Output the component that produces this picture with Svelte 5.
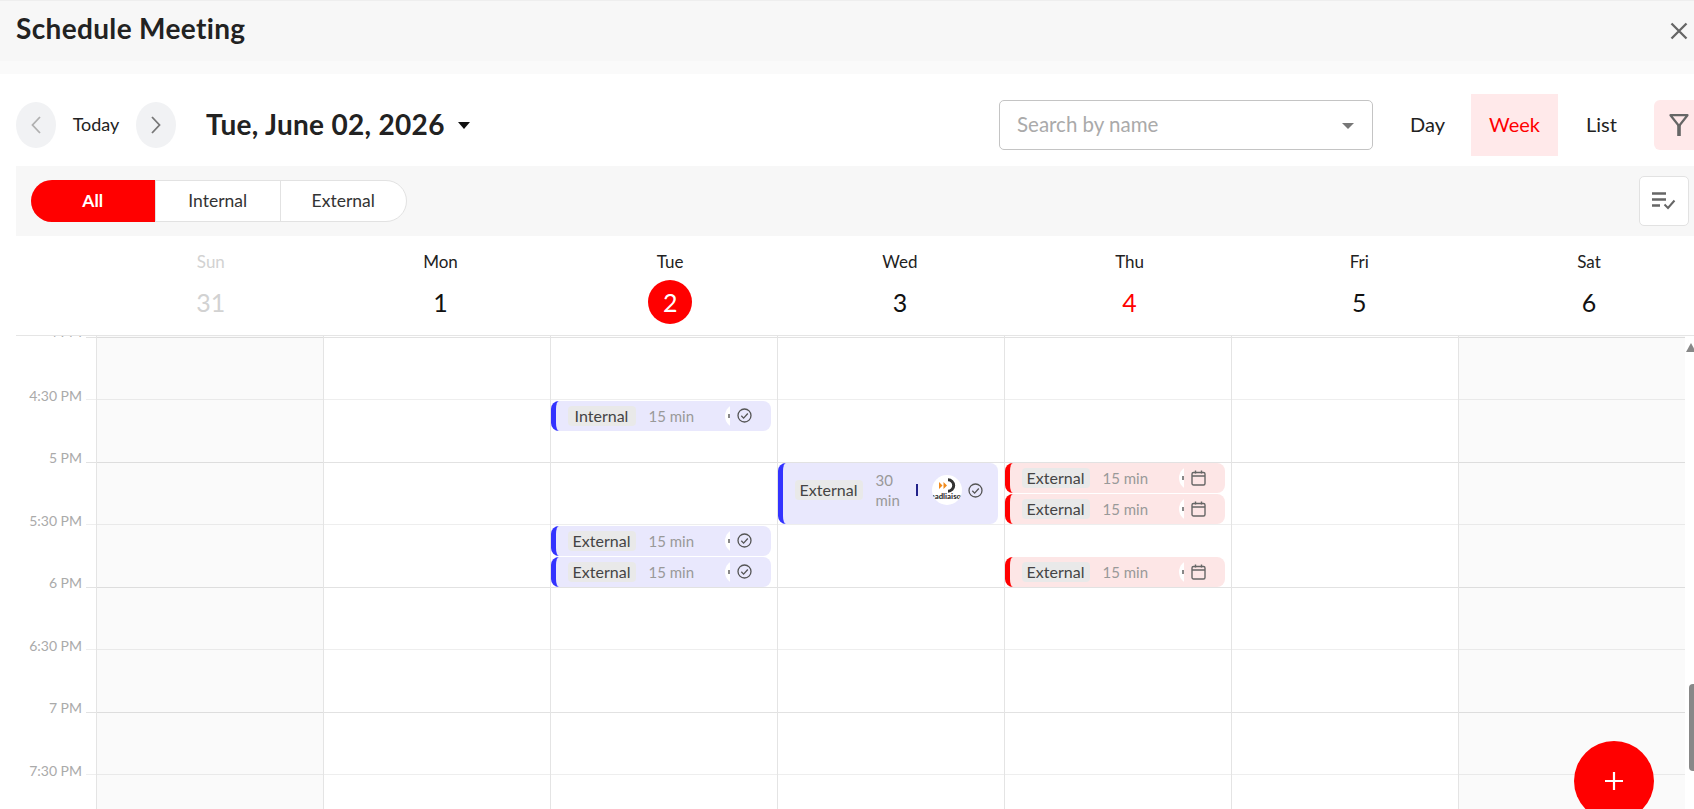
<script>
  const days = [
    { name: 'Sun', num: 31, kind: 'past' },
    { name: 'Mon', num: 1 },
    { name: 'Tue', num: 2, kind: 'current' },
    { name: 'Wed', num: 3 },
    { name: 'Thu', num: 4, kind: 'marked' },
    { name: 'Fri', num: 5 },
    { name: 'Sat', num: 6 }
  ];

  const times = ['4 PM', '4:30 PM', '5 PM', '5:30 PM', '6 PM', '6:30 PM', '7 PM', '7:30 PM'];

  // q = quarter hours after 4 PM
  const events = {
    Tue: [
      { label: 'Internal', q: 2, tone: 'blue' },
      { label: 'External', q: 6, tone: 'blue' },
      { label: 'External', q: 7, tone: 'blue' }
    ],
    Wed: [{ label: 'External', q: 4, tone: 'blue', dur: '30 min', open: true }],
    Thu: [
      { label: 'External', q: 4, tone: 'red' },
      { label: 'External', q: 5, tone: 'red' },
      { label: 'External', q: 7, tone: 'red' }
    ]
  };

  const eventTop = (q) => q * 31.25 + 2;
</script>

<div class="page">
  <header class="titlebar">
    <h1>Schedule Meeting</h1>
    <svg class="close" width="18" height="18" viewBox="0 0 18 18">
      <path d="M1.5 1.5l15 15M16.5 1.5l-15 15" stroke="#666" stroke-width="2.300" fill="none" />
    </svg>
  </header>
  <div class="strip"></div>

  <div class="toolbar">
    <button class="round" aria-label="Previous">
      <svg width="12" height="20" viewBox="0 0 12 20"><path d="M10 2L2.5 10 10 18" stroke="#b0b0b0" stroke-width="1.8" fill="none" /></svg>
    </button>
    <span class="today-link">Today</span>
    <button class="round" aria-label="Next">
      <svg width="12" height="20" viewBox="0 0 12 20"><path d="M2 2l7.5 8L2 18" stroke="#777" stroke-width="1.8" fill="none" /></svg>
    </button>
    <div class="date">Tue, June 02, 2026</div>
    <span class="date-caret"></span>

    <div class="search">
      <span>Search by name</span>
      <i class="search-caret"></i>
    </div>
    <div class="tabs">
      <span class="tab">Day</span>
      <span class="tab active">Week</span>
      <span class="tab">List</span>
    </div>
    <button class="filter" aria-label="Filter">
      <svg width="20" height="22" viewBox="0 0 20 22">
        <path d="M1.500 1.200h17L10 12z" fill="none" stroke="#666" stroke-width="2.200" stroke-linejoin="round" />
        <path d="M8.200 10.500h3.600V22H8.200z" fill="#666" />
      </svg>
    </button>
  </div>

  <div class="filterbar">
    <div class="segments">
      <span class="seg on">All</span>
      <span class="seg">Internal</span>
      <span class="seg">External</span>
    </div>
    <button class="sort" aria-label="Sort">
      <svg width="24" height="18" viewBox="0 0 24 18">
        <path d="M0 1.500h14M0 7.500h14M0 13.500h8" stroke="#666" stroke-width="2.400" fill="none" />
        <path d="M12.500 12.500l3.500 3.500 6.500-7.500" stroke="#666" stroke-width="2" fill="none" />
      </svg>
    </button>
  </div>

  <div class="week-head">
    {#each days as d}
      <div class="day {d.kind ?? ''}">
        <div class="day-name">{d.name}</div>
        <div class="day-num"><span>{d.num}</span></div>
      </div>
    {/each}
  </div>

  <div class="cal">
    {#each times as t, i}
      <div class="row">
        <div class="time">{t}</div>
        <div class="line" class:hour={i % 2 === 0}></div>
      </div>
    {/each}

    <div class="cols">
      {#each days as d}
        <div class="col" class:shade={d.name === 'Sun' || d.name === 'Sat'}>
          {#each events[d.name] ?? [] as e}
            <div class="event {e.tone}" class:open={e.open} style="top: {eventTop(e.q)}px">
              <span class="tag">{e.label}</span>
              <span class="dur">{e.dur ?? '15 min'}</span>
              {#if e.open}
                <i class="sep"></i>
                <svg class="logo" width="30" height="30" viewBox="0 0 30 30">
                  <clipPath id="logo-clip"><circle cx="15" cy="15" r="15" /></clipPath>
                  <circle cx="15" cy="15" r="15" fill="#fff" />
                  <g clip-path="url(#logo-clip)">
                    <path d="M7 7l3.500 3.500L7 14zM11.500 7l3.500 3.500-3.500 3.500z" fill="#f08a1d" />
                    <path d="M16 4.800a5.700 5.700 0 1 1 0 11.400" fill="none" stroke="#333" stroke-width="3" />
                    <text x="15" y="23.500" text-anchor="middle" font-size="7.800" font-weight="900" fill="#333">leadliaison</text>
                  </g>
                </svg>
              {:else}
                <span class="peek"><b></b></span>
              {/if}
              {#if e.tone === 'blue'}
                <svg class="state" width="15" height="15" viewBox="0 0 15 15">
                  <circle cx="7.500" cy="7.500" r="6.500" fill="none" stroke="#555" stroke-width="1.300" />
                  <path d="M4.300 7.800l2.300 2.300 4.200-4.600" fill="none" stroke="#555" stroke-width="1.300" />
                </svg>
              {:else}
                <svg class="state" width="15" height="16" viewBox="0 0 15 16">
                  <rect x="1" y="2.500" width="13" height="12.500" rx="1.500" fill="none" stroke="#666" stroke-width="1.400" />
                  <path d="M1 6h13M4.500 0.500v3M10.500 0.500v3" fill="none" stroke="#666" stroke-width="1.400" />
                </svg>
              {/if}
            </div>
          {/each}
        </div>
      {/each}
    </div>

    <button class="fab" aria-label="Add">
      <svg width="18" height="18" viewBox="0 0 18 18"><path d="M9 0v18M0 9h18" stroke="#fff" stroke-width="2.200" /></svg>
    </button>
    <i class="scroll-up"></i>
    <i class="scroll-thumb"></i>
  </div>
</div>

<style>
  :global(body) {
    background: #fff;
  }
  .page {
    width: 1694px;
    height: 809px;
    overflow: hidden;
    font-family: Lato, "Open Sans", sans-serif;
    color: #222;
    display: flex;
    flex-direction: column;
  }
  button {
    border: none;
    padding: 0;
    font: inherit;
    display: flex;
    align-items: center;
    justify-content: center;
  }

  .titlebar {
    flex: none;
    height: 60px;
    border-top: 1px solid #eee;
    background: #f7f7f7;
    display: flex;
    align-items: center;
    justify-content: space-between;
    padding: 0 6px 0 16px;
  }
  h1 {
    margin: -6px 0 0;
    font-size: 28px;
    letter-spacing: 0.35px;
    font-weight: 700;
    color: #222;
  }
  .strip {
    flex: none;
    height: 13px;
    background: #fafafa;
  }

  .toolbar {
    flex: none;
    height: 92px;
    box-sizing: border-box;
    padding: 20px 0 10px 16px;
    display: flex;
    align-items: center;
  }
  .round {
    flex: none;
    width: 40px;
    height: 46px;
    border-radius: 50%;
    background: #f1f2f4;
  }
  .today-link {
    width: 80px;
    margin-top: -3px;
    text-align: center;
    font-size: 18px;
  }
  .date {
    margin: -3px 0 0 30px;
    font-size: 28px;
    letter-spacing: 0.3px;
    font-weight: 700;
    color: #222;
  }
  .date-caret {
    margin-left: 13px;
    border: 6.500px solid transparent;
    border-top: 7px solid #111;
    border-bottom: 0;
  }
  .search {
    margin-left: auto;
    width: 374px;
    height: 50px;
    box-sizing: border-box;
    border: 1px solid #c4c4c4;
    border-radius: 5px;
    padding: 0 17px 3px;
    display: flex;
    align-items: center;
    justify-content: space-between;
    font-size: 20.500px;
    color: #aaa;
  }
  .search-caret {
    border: 6px solid transparent;
    border-top: 6px solid #777;
    border-bottom: 0;
    margin: 5px 1px 0 0;
  }
  .tabs {
    display: flex;
    margin-left: 11px;
  }
  .tab {
    width: 87px;
    height: 62px;
    padding-bottom: 3px;
    box-sizing: border-box;
    display: flex;
    align-items: center;
    justify-content: center;
    font-size: 20px;
    color: #222;
  }
  .tab.active {
    background: #ffe9ea;
    color: #f00;
  }
  .filter {
    flex: none;
    width: 50px;
    height: 50px;
    margin: 0 -10px 0 9px;
    border-radius: 6px;
    background: #ffe9ea;
  }

  .filterbar {
    flex: none;
    height: 70px;
    margin-left: 16px;
    box-sizing: border-box;
    padding: 0 5px 0 15px;
    background: #f7f7f7;
    display: flex;
    align-items: center;
    justify-content: space-between;
  }
  .segments {
    display: flex;
    height: 42px;
    box-sizing: border-box;
    background: #fff;
    border: 1px solid #e2e2e2;
    border-radius: 21px;
  }
  .seg {
    width: 124.500px;
    padding-bottom: 2px;
    display: flex;
    align-items: center;
    justify-content: center;
    font-size: 17.500px;
    color: #333;
    border-left: 1px solid #e2e2e2;
  }
  .seg.on {
    width: 123.500px;
    margin: -1px 0 -1px -1px;
    border: none;
    border-radius: 21px 0 0 21px;
    background: #f00;
    color: #fff;
    font-weight: 700;
  }
  .sort {
    width: 50px;
    height: 50px;
    box-sizing: border-box;
    border: 1px solid #e2e2e2;
    border-radius: 5px;
    background: #fff;
  }

  .week-head {
    flex: none;
    height: 100px;
    box-sizing: border-box;
    margin-left: 16px;
    padding-left: 80px;
    border-bottom: 1px solid #e5e5e5;
    display: grid;
    grid-template-columns: repeat(7, 229.700px);
  }
  .day {
    text-align: center;
    padding-top: 16px;
  }
  .day-name {
    font-size: 17px;
    line-height: 20px;
  }
  .day-num {
    margin-top: 7px;
    font-size: 25px;
    height: 46px;
    display: flex;
    align-items: center;
    justify-content: center;
    color: #111;
  }
  .day-num span {
    width: 44px;
    height: 44px;
    border-radius: 50%;
    display: flex;
    align-items: center;
    justify-content: center;
  }
  .past .day-name,
  .past .day-num {
    color: #d2d2d2;
  }
  .current .day-num span {
    background: #f00;
    color: #fff;
  }
  .marked .day-num {
    color: #f00;
  }

  .cal {
    position: relative;
    flex: 1;
    min-height: 0;
    overflow: hidden;
    padding-top: 0.500px;
  }
  .row {
    height: 62.500px;
    display: flex;
    margin-right: 9px;
  }
  .time {
    flex: none;
    width: 82px;
    height: 18px;
    margin: -12.500px 4px 0 0;
    text-align: right;
    font-size: 14px;
    line-height: 18px;
    color: #aaa;
  }
  .row:first-child .time {
    margin-top: -14px;
  }
  .line {
    flex: 1;
    border-top: 1px solid #eee;
  }
  .line.hour {
    border-top-color: #e2e2e2;
  }
  .cols {
    position: absolute;
    inset: 0 9px 0 95.500px;
    display: grid;
    grid-template-columns: repeat(7, 227px);
  }
  .col {
    position: relative;
    border-left: 1px solid #e4e4e4;
  }
  .col.shade {
    background: rgba(0, 0, 0, 0.02);
  }

  .event {
    position: absolute;
    left: 0;
    width: 220px;
    height: 30px;
    box-sizing: border-box;
    border-left: 5px solid;
    border-radius: 8px;
    padding-left: 12px;
    display: flex;
    align-items: center;
  }
  .event.open {
    height: 61px;
    padding-bottom: 7px;
  }
  .event.blue {
    background: #e9e8fd;
    border-left-color: #3333ff;
  }
  .event.red {
    background: #fde6e6;
    border-left-color: #f00;
  }
  .tag {
    flex: none;
    width: 68px;
    height: 20px;
    border-radius: 4px;
    background: #e9e9e9;
    font-size: 16px;
    line-height: 19px;
    text-align: center;
    color: #444;
  }
  .dur {
    flex: none;
    width: 76px;
    margin-left: 13px;
    font-size: 15px;
    line-height: 20px;
    color: #999;
  }
  .peek {
    flex: none;
    position: relative;
    width: 5px;
    height: 24px;
    overflow: hidden;
  }
  .peek::before {
    content: '';
    display: block;
    width: 24px;
    height: 24px;
    border-radius: 50%;
    background: #fff;
  }
  .peek b {
    position: absolute;
    left: 3px;
    top: 10px;
    width: 2px;
    height: 4px;
    background: #888;
  }
  .state {
    flex: none;
    margin-left: 7px;
  }
  .open .state {
    margin-left: 6px;
  }
  .open .dur {
    width: 33px;
  }
  .sep {
    flex: none;
    width: 2px;
    height: 12px;
    margin: 0 14px 0 7px;
    background: #22228a;
  }
  .logo {
    flex: none;
    display: block;
  }

  .fab {
    position: absolute;
    left: 1574px;
    top: 405px;
    width: 80px;
    height: 80px;
    border-radius: 50%;
    background: #f00;
  }
  .scroll-up {
    position: absolute;
    right: 0;
    top: 7px;
    width: 0;
    height: 0;
    border: 5px solid transparent;
    border-top: 0;
    border-bottom: 9px solid #888;
    margin-right: -2px;
  }
  .scroll-thumb {
    position: absolute;
    right: 0;
    top: 348px;
    width: 5px;
    height: 87px;
    border-radius: 4px 0 0 4px;
    background: #888;
  }
</style>
